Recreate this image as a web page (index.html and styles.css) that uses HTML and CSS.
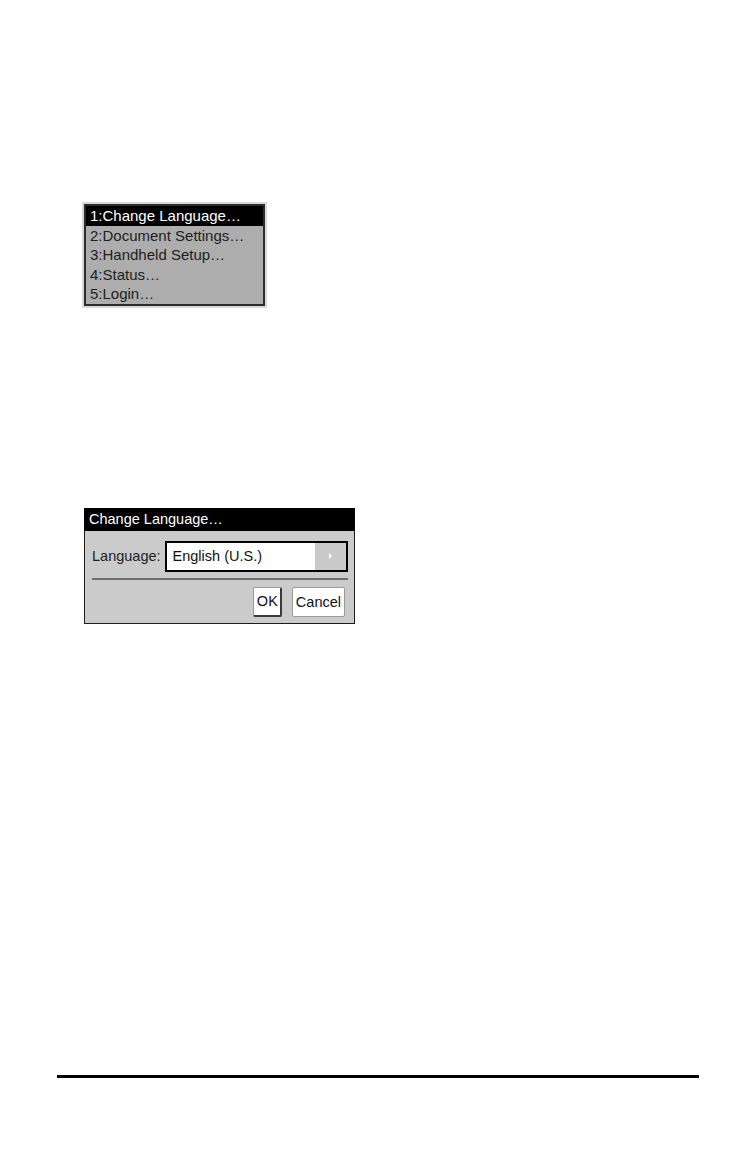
FILE: index.html
```html
<!DOCTYPE html>
<html>
<head>
<meta charset="utf-8">
<link rel="stylesheet" href="styles.css">
</head>
<body>
<div class="page">
  <div class="menu-frame">
    <ul class="menu">
      <li class="item selected">1:Change Language…</li>
      <li class="item">2:Document Settings…</li>
      <li class="item">3:Handheld Setup…</li>
      <li class="item">4:Status…</li>
      <li class="item">5:Login…</li>
    </ul>
  </div>

  <div class="dialog">
    <div class="dialog-title">Change Language…</div>
    <div class="dialog-body">
      <div class="field-row">
        <span class="label">Language:</span>
        <div class="select">
          <span class="select-value">English (U.S.)</span>
          <span class="select-arrow"><span class="tri"></span></span>
        </div>
      </div>
      <div class="separator"></div>
      <div class="buttons">
        <button class="btn btn-ok">OK</button>
        <button class="btn">Cancel</button>
      </div>
    </div>
  </div>

  <div class="footer-rule"></div>
</div>
</body>
</html>
```
FILE: styles.css
```css
html, body {
  margin: 0;
  padding: 0;
  background: #ffffff;
}
.page {
  width: 756px;
  height: 1161px;
  padding-top: 202px;
  box-sizing: border-box;
  font-family: "Liberation Sans", Arial, sans-serif;
}
.menu-frame {
  margin-left: 82px;
  width: 181px;
  border: 2px solid #d8d8d8;
}
.menu {
  list-style: none;
  margin: 0;
  padding: 0;
  border: 2px solid #2b2b2b;
  background: #adadad;
}
.item {
  height: 19.6px;
  line-height: 19.6px;
  font-size: 15px;
  color: #1e1e1e;
  padding-left: 4px;
  white-space: nowrap;
}
.item.selected {
  background: #000000;
  color: #ffffff;
}
.dialog {
  margin-top: 200px;
  margin-left: 84px;
  width: 271px;
}
.dialog-title {
  height: 23px;
  line-height: 23px;
  background: #000000;
  color: #ffffff;
  font-size: 14.5px;
  padding-left: 5px;
}
.dialog-body {
  height: 93px;
  box-sizing: border-box;
  background: #cbcbcb;
  border: 1px solid #1c1c1c;
  border-top: none;
  padding: 10px 6px 0 7px;
}
.field-row {
  display: flex;
  align-items: center;
  gap: 4px;
}
.label {
  font-size: 14.5px;
  color: #1e1e1e;
}
.select {
  flex: 1;
  height: 31px;
  box-sizing: border-box;
  border: 2px solid #000000;
  background: #ffffff;
  display: flex;
  align-items: stretch;
}
.select-value {
  flex: 1;
  font-size: 14.5px;
  color: #111111;
  line-height: 27px;
  padding-left: 6px;
}
.select-arrow {
  width: 31px;
  background: #c9c9c9;
  display: flex;
  align-items: center;
  justify-content: center;
}
.tri {
  width: 0;
  height: 0;
  border-top: 3px solid transparent;
  border-bottom: 3px solid transparent;
  border-left: 3px solid #ffffff;
}
.separator {
  height: 2px;
  background: #6e6e6e;
  margin-top: 6px;
}
.buttons {
  display: flex;
  justify-content: flex-end;
  gap: 10px;
  margin-top: 7px;
  padding-right: 3px;
}
.btn {
  height: 30px;
  box-sizing: border-box;
  background: #ffffff;
  border: 1px solid #9a9a9a;
  border-radius: 2px;
  font-family: "Liberation Sans", Arial, sans-serif;
  font-size: 14.5px;
  color: #111111;
  padding: 0 3px;
  margin: 0;
}
.btn-ok {
  width: 29px;
  border-right: 2px solid #3a3a3a;
  border-bottom: 2px solid #3a3a3a;
}
.footer-rule {
  margin-top: 451px;
  margin-left: 57px;
  width: 642px;
  height: 3px;
  background: #000000;
}
```
